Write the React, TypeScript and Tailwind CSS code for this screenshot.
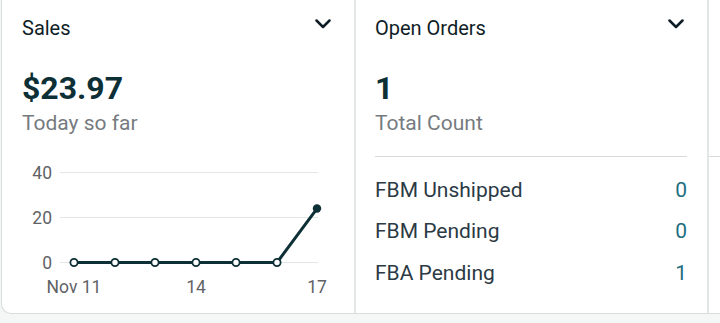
import React from "react";

const FONT = { fontFamily: "Roboto, 'Liberation Sans', sans-serif" };

function Chevron() {
  return (
    <svg width="16" height="10" viewBox="0 0 16 10" className="block">
      <path d="M1.5 1.5 L8 8 L14.5 1.5" fill="none" stroke="#0f1d26" strokeWidth="2.5" strokeLinecap="round" strokeLinejoin="round" />
    </svg>
  );
}

function Chart() {
  // svg origin at page x=2, y=150
  const xs = [72, 113, 153, 194, 234, 275, 315];
  const zeroY = 112.5;
  const scale = 2.25;
  const vals = [0, 0, 0, 0, 0, 0, 23.97];
  const pts = xs.map((x, i) => [x, zeroY - vals[i] * scale]);
  const grid = [
    { v: "40", y: 22.5 },
    { v: "20", y: 67.5 },
    { v: "0", y: 112.5 },
  ];
  return (
    <svg width="352" height="150" viewBox="0 0 352 150" className="block">
      {grid.map((g) => (
        <g key={g.v}>
          <line x1="58" x2="316" y1={g.y} y2={g.y} stroke="#e3e6e6" strokeWidth="1.2" />
          <text x="50" y={g.y + 6.2} textAnchor="end" fontSize="17.5" fill="#5f6366" style={FONT}>
            {g.v}
          </text>
        </g>
      ))}
      <polyline
        points={pts.map((p) => p.join(",")).join(" ")}
        fill="none"
        stroke="#0d2f36"
        strokeWidth="3"
        strokeLinejoin="round"
      />
      {pts.slice(0, 6).map((p, i) => (
        <circle key={i} cx={p[0]} cy={p[1]} r="3.6" fill="#ffffff" stroke="#0d2f36" strokeWidth="1.8" />
      ))}
      <circle cx={pts[6][0]} cy={pts[6][1]} r="4.2" fill="#0d2f36" />
      <text x="72" y="143" textAnchor="middle" fontSize="17.5" fill="#5f6366" style={FONT}>
        Nov 11
      </text>
      <text x="194" y="143" textAnchor="middle" fontSize="17.5" fill="#5f6366" style={FONT}>
        14
      </text>
      <text x="315" y="143" textAnchor="middle" fontSize="17.5" fill="#5f6366" style={FONT}>
        17
      </text>
    </svg>
  );
}

export default function App() {
  const rows = [
    { label: "FBM Unshipped", value: "0" },
    { label: "FBM Pending", value: "0" },
    { label: "FBA Pending", value: "1" },
  ];
  return (
    <div className="w-[720px] h-[323px] bg-[#f5f6f6] overflow-hidden" style={FONT}>
      <div className="ml-[1px] h-[314px] flex bg-white border-l border-b border-[#d9dddd] rounded-bl-[10px] overflow-hidden">
        {/* Sales card */}
        <div className="w-[354px] shrink-0 border-r-2 border-[#e3e6e6] flex flex-col">
          <div className="flex items-start justify-between pt-[16px] pl-[20px] pr-[23px] h-[54px]">
            <div className="text-[20px] leading-[24px] text-[#0f1d26]">Sales</div>
            <div className="mt-[3px]">
              <Chevron />
            </div>
          </div>
          <div className="pl-[20px] mt-[16px] text-[32px] leading-[36px] font-bold text-[#0d2f36]">$23.97</div>
          <div className="pl-[20px] mt-[5px] text-[21px] leading-[24px] text-[#767b80]">Today so far</div>
          <div className="mt-[15px]">
            <Chart />
          </div>
        </div>
        {/* Open Orders card */}
        <div className="w-[353px] shrink-0 border-r-2 border-[#e3e6e6] flex flex-col pl-[19px] pr-[20px]">
          <div className="flex items-start justify-between pt-[16px] pr-[3px] h-[54px]">
            <div className="text-[20px] leading-[24px] text-[#0f1d26]">Open Orders</div>
            <div className="mt-[3px]">
              <Chevron />
            </div>
          </div>
          <div className="mt-[16px] text-[32px] leading-[36px] font-bold text-[#0d2f36]">1</div>
          <div className="mt-[5px] text-[21px] leading-[24px] text-[#767b80]">Total Count</div>
          <div className="mt-[21px] border-t border-[#d5d9d9] pt-[12px] flex flex-col">
            {rows.map((r) => (
              <div key={r.label} className="h-[41.5px] flex items-center justify-between">
                <span className="text-[21px] leading-[24px] text-[#2b3a44]">{r.label}</span>
                <span className="text-[21px] leading-[24px] text-[#1e6f80]">{r.value}</span>
              </div>
            ))}
          </div>
        </div>
        {/* Next card (partially visible) */}
        <div className="flex-1 flex flex-col">
          <div className="mt-[156px] border-t border-[#d5d9d9]" />
        </div>
      </div>
    </div>
  );
}
